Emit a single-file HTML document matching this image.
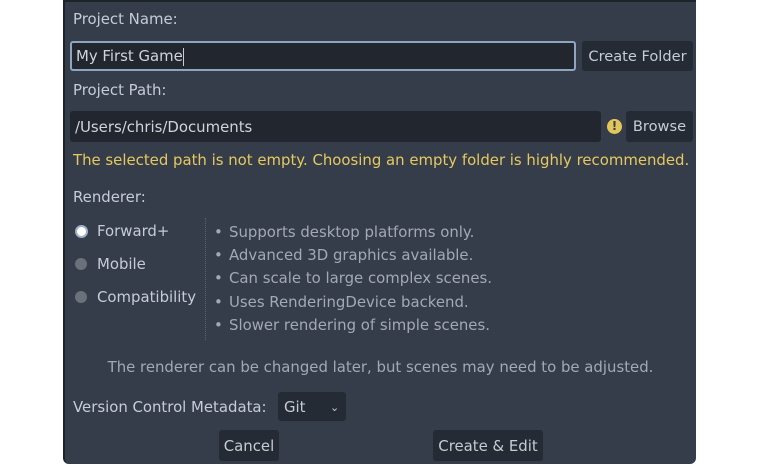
<!DOCTYPE html>
<html><head><style>
body{margin:0;width:759px;height:466px;background:#fff;position:relative;overflow:hidden;font-family:"DejaVu Sans","Liberation Sans",sans-serif;font-size:14.9px;}
.p{position:absolute;left:63px;top:0;width:633px;height:464px;background:#363d4a;border-left:2px solid #1e2229;border-top:2px solid #1e2229;border-radius:0 0 6px 6px;box-sizing:border-box;}
.t{position:absolute;color:#c6ccd6;white-space:nowrap;line-height:20px;}
.g{color:#a3a9b3;}
.b{position:absolute;background:#252b35;border-radius:3px;color:#c6ccd6;text-align:center;line-height:30px;}
.in{position:absolute;background:#21262f;border-radius:3px;color:#cfd4dc;line-height:30px;padding-left:5px;box-sizing:border-box;}
.r{position:absolute;width:12px;height:12px;border-radius:50%;}
.bl span{display:inline-block;width:15px;}
</style></head><body>
<div class="p"></div>
<div class="t" style="left:73px;top:9px">Project Name:</div>
<div class="in" style="left:70px;top:41px;width:506px;height:30px;border:2px solid #8ea4bf;line-height:27px;padding-left:4px">My First Game<span style="display:inline-block;width:1px;height:18px;background:#ccc;vertical-align:middle"></span></div>
<div class="b" style="left:582px;top:41px;width:111px;height:30px;line-height:31px;font-size:14.6px">Create Folder</div>
<div class="t" style="left:73px;top:80px">Project Path:</div>
<div class="in" style="left:70px;top:111px;width:531px;height:31px;line-height:32px">/Users/chris/Documents</div>
<div style="position:absolute;left:607px;top:119px;width:15px;height:15px;border-radius:50%;background:#e3c65a;color:#363d4a;font-weight:bold;font-size:12px;line-height:15px;text-align:center">!</div>
<div class="b" style="left:626px;top:111px;width:67px;height:31px;line-height:32px;font-size:14.6px">Browse</div>
<div class="t" style="left:73px;top:150px;color:#e5c95f">The selected path is not empty. Choosing an empty folder is highly recommended.</div>
<div class="t" style="left:73px;top:187px">Renderer:</div>
<div class="r" style="left:75px;top:225px;background:#fff;border:2px solid #9fb0c6;width:9px;height:9px"></div>
<div class="r" style="left:75px;top:258px;background:#6b717b"></div>
<div class="r" style="left:75px;top:291px;background:#6b717b"></div>
<div class="t" style="left:97px;top:221px">Forward+</div>
<div class="t" style="left:97px;top:254px">Mobile</div>
<div class="t" style="left:97px;top:287px">Compatibility</div>
<div style="position:absolute;left:205px;top:218px;height:122px;border-left:1px dotted #5a616c"></div>
<div class="t g bl" style="left:214px;top:221px;line-height:23.2px"><span>•</span>Supports desktop platforms only.<br><span>•</span>Advanced 3D graphics available.<br><span>•</span>Can scale to large complex scenes.<br><span>•</span>Uses RenderingDevice backend.<br><span>•</span>Slower rendering of simple scenes.</div>
<div class="t g" style="left:65px;width:631px;text-align:center;top:357px">The renderer can be changed later, but scenes may need to be adjusted.</div>
<div class="t" style="left:73px;top:397px">Version Control Metadata:</div>
<div class="b" style="left:278px;top:392px;width:68px;height:29px;text-align:left;padding-left:6px;box-sizing:border-box;line-height:31px">Git<span style="position:absolute;left:52px;top:0;font-size:11px">&#8964;</span></div>
<div class="b" style="left:219px;top:430px;width:60px;height:31px;line-height:32px">Cancel</div>
<div class="b" style="left:433px;top:430px;width:110px;height:31px;line-height:32px">Create &amp; Edit</div>
</body></html>
